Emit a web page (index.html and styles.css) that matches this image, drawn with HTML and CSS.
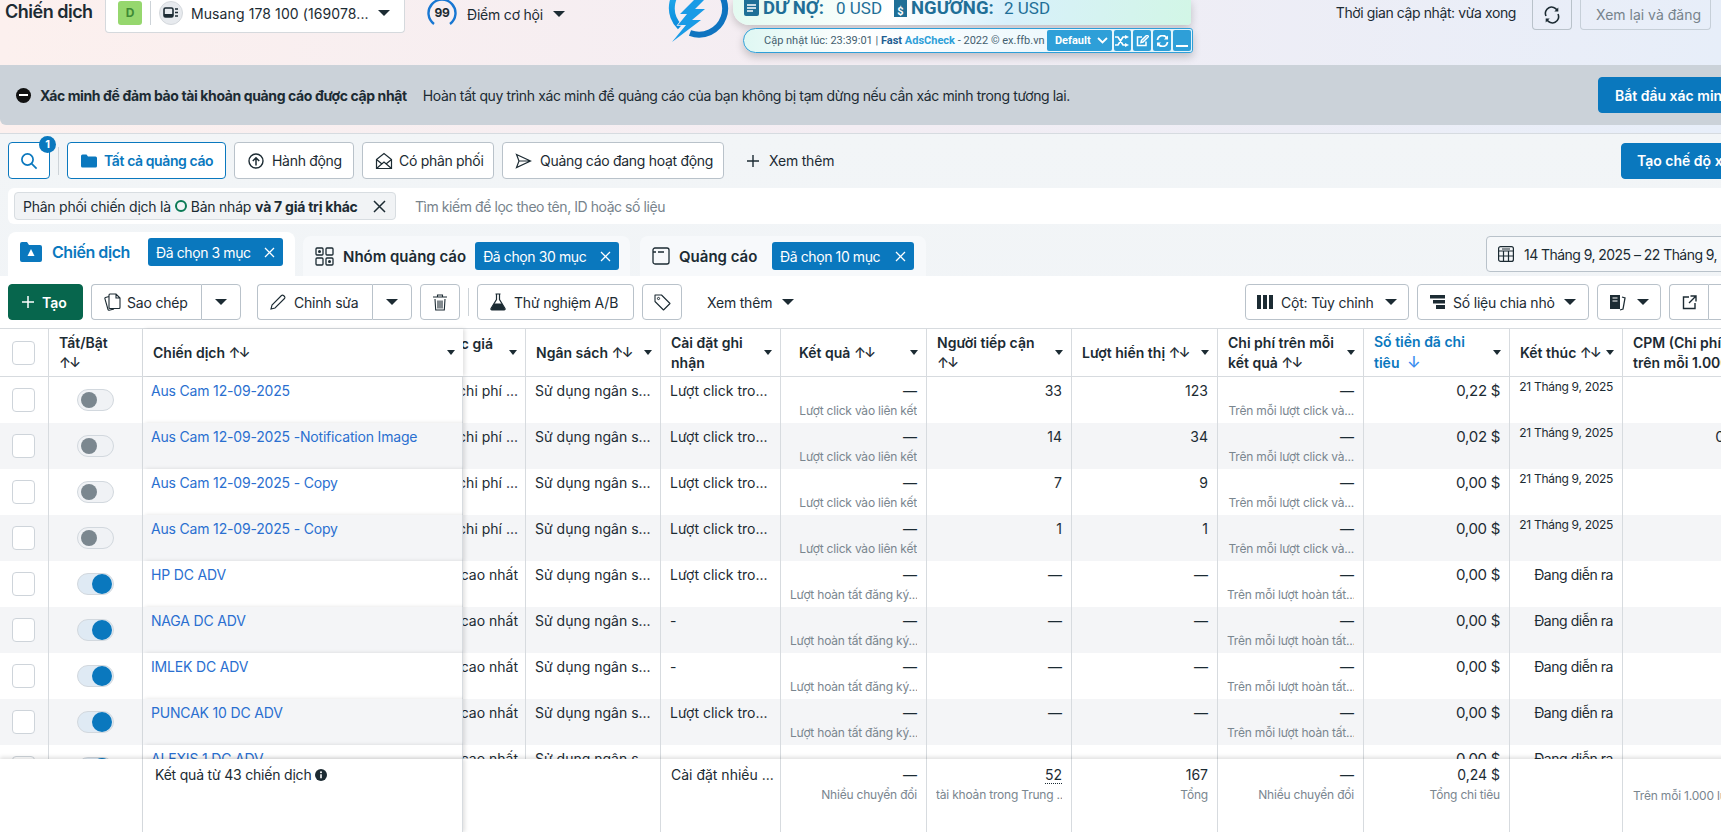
FILE: index.html
```html
<!DOCTYPE html>
<html lang="vi">
<head>
<meta charset="utf-8">
<title>Chiến dịch</title>
<link rel="stylesheet" href="styles.css">
</head>
<body>
<div class="page">
  <header class="topbar">
    <h1 class="title">Chiến dịch</h1>
    <div class="account">
      <span class="badge-d">D</span>
      <span class="vsep"></span>
      <span class="acc-icon"><svg width="16" height="14" viewBox="0 0 16 14"><rect x="1" y="2" width="9" height="9" rx="1.5" fill="none" stroke="#1c2b33" stroke-width="1.6"/><rect x="1" y="8" width="9" height="3" fill="#1c2b33"/><path d="M12 3h3M12 6.5h3M12 10h3" stroke="#1c2b33" stroke-width="1.6"/></svg></span>
      <span class="acc-name">Musang 178 100 (169078...</span>
      <span class="caret big"></span>
    </div>
    <div class="score">
      <span class="ring"><svg width="30" height="30" viewBox="0 0 30 30"><path d="M7 25A13.5 13.5 0 1 1 23 25" fill="none" stroke="#1877d2" stroke-width="2.4"/></svg><b>99</b></span>
      <span>Điểm cơ hội</span>
      <span class="caret big"></span>
    </div>
    <div class="top-right">
      <span class="updated">Thời gian cập nhật: vừa xong</span>
      <button class="btn top-btn icon-top"><svg width="18" height="18" viewBox="0 0 18 18"><path d="M3 10A6.2 6.2 0 0 1 14.2 4.6M15 8A6.2 6.2 0 0 1 3.8 13.4" fill="none" stroke="#1c2b33" stroke-width="1.6"/><path d="M15.3 1.6v4h-4zM2.7 16.4v-4h4z" fill="#1c2b33"/></svg></button>
      <button class="btn top-btn review">Xem lại và đăng</button>
    </div>
  </header>

  <section class="banner">
    <span class="stop"><i></i></span>
    <b>Xác minh để đảm bảo tài khoản quảng cáo được cập nhật</b>
    <span class="banner-text">Hoàn tất quy trình xác minh để quảng cáo của bạn không bị tạm dừng nếu cần xác minh trong tương lai.</span>
    <button class="btn primary banner-btn">Bắt đầu xác minh</button>
  </section>

  <section class="workspace">
    <div class="views">
      <button class="btn search selected"><svg width="18" height="18" viewBox="0 0 18 18"><circle cx="7.5" cy="7.5" r="5.6" fill="none" stroke="#0a78be" stroke-width="1.7"/><path d="M11.6 11.6l5 5" stroke="#0a78be" stroke-width="1.7"/></svg><span class="count">1</span></button>
      <span class="vsep tall"></span>
      <button class="btn selected all"><svg width="16" height="14" viewBox="0 0 16 14"><path d="M0 2A1.5 1.5 0 0 1 1.5.5h4l1.5 2h7.5A1.5 1.5 0 0 1 16 4v8a1.5 1.5 0 0 1-1.5 1.5h-13A1.5 1.5 0 0 1 0 12z" fill="#0a78be"/></svg>Tất cả quảng cáo</button>
      <button class="btn v1"><svg width="16" height="16" viewBox="0 0 16 16"><circle cx="8" cy="8" r="7" fill="none" stroke="#1c2b33" stroke-width="1.4"/><path d="M8 12.5V5M4.8 8L8 4.8 11.2 8" fill="none" stroke="#1c2b33" stroke-width="1.5"/></svg>Hành động</button>
      <button class="btn v2"><svg width="18" height="18" viewBox="0 0 18 18"><path d="M1.5 7.5L9 1.5l7.5 6v9h-15zM1.5 16.5L9 10l7.5 6.5M1.5 7.5L7 12M16.5 7.5L11 12" fill="none" stroke="#1c2b33" stroke-width="1.2"/></svg>Có phân phối</button>
      <button class="btn v3"><svg width="17" height="16" viewBox="0 0 17 16"><path d="M1.5 1.5L15.5 8 1.5 14.500 4 8zM4 8h11.5" fill="none" stroke="#1c2b33" stroke-width="1.2"/></svg>Quảng cáo đang hoạt động</button>
      <span class="more-view"><svg width="12" height="12" viewBox="0 0 12 12"><path d="M6 0v12M0 6h12" stroke="#1c2b33" stroke-width="1.4"/></svg>Xem thêm</span>
      <button class="btn primary create-view">Tạo chế độ xem</button>
    </div>

    <div class="filter">
      <span class="chip">Phân phối chiến dịch là <i class="dot"></i> Bản nháp <b>và 7 giá trị khác</b>
        <svg class="chip-x" width="13" height="13" viewBox="0 0 13 13"><path d="M1 1l11 11M12 1L1 12" stroke="#1c2b33" stroke-width="1.5"/></svg>
      </span>
      <span class="placeholder">Tìm kiếm để lọc theo tên, ID hoặc số liệu</span>
    </div>

    <div class="tabs">
      <div class="tab active">
        <svg width="22" height="20" viewBox="0 0 22 20"><path d="M0 2a2 2 0 0 1 2-2h5l2 3h11a2 2 0 0 1 2 2v13a2 2 0 0 1-2 2H2a2 2 0 0 1-2-2z" fill="#0a78be"/><path d="M11 7l3.5 7h-7z" fill="#fff"/></svg>
        <span class="tab-name">Chiến dịch</span>
        <span class="sel-chip">Đã chọn 3 mục<svg width="11" height="11" viewBox="0 0 11 11"><path d="M1 1l9 9M10 1l-9 9" stroke="#fff" stroke-width="1.3"/></svg></span>
      </div>
      <div class="tab t2">
        <svg width="19" height="19" viewBox="0 0 19 19"><g fill="none" stroke="#1c2b33" stroke-width="1.3"><rect x="1" y="1" width="7" height="7" rx="1"/><rect x="11" y="1" width="7" height="7" rx="1"/><rect x="1" y="11" width="7" height="7" rx="1"/><rect x="11" y="11" width="7" height="7" rx="1"/></g><circle cx="4.5" cy="4.5" r="1.5" fill="#1c2b33"/><circle cx="14.5" cy="14.5" r="1.5" fill="#1c2b33"/></svg>
        <span class="tab-name">Nhóm quảng cáo</span>
        <span class="sel-chip">Đã chọn 30 mục<svg width="11" height="11" viewBox="0 0 11 11"><path d="M1 1l9 9M10 1l-9 9" stroke="#fff" stroke-width="1.3"/></svg></span>
      </div>
      <div class="tab t3">
        <svg width="18" height="18" viewBox="0 0 18 18"><rect x="1" y="1" width="16" height="16" rx="2" fill="none" stroke="#1c2b33" stroke-width="1.3"/><path d="M1 5h3M6 5h6" stroke="#1c2b33" stroke-width="1.3"/></svg>
        <span class="tab-name">Quảng cáo</span>
        <span class="sel-chip">Đã chọn 10 mục<svg width="11" height="11" viewBox="0 0 11 11"><path d="M1 1l9 9M10 1l-9 9" stroke="#fff" stroke-width="1.3"/></svg></span>
      </div>
      <button class="btn date"><svg width="16" height="16" viewBox="0 0 16 16"><g fill="none" stroke="#1c2b33" stroke-width="1.2"><rect x=".6" y=".6" width="14.8" height="14.8" rx="2"/><path d="M.6 5h14.8M.6 10h14.8M5.5 5v10.4M10.5 5v10.4M4 3h8"/></g></svg>14 Tháng 9, 2025 – 22 Tháng 9, 2025</button>
    </div>

    <div class="panel">
      <div class="toolbar">
        <button class="btn create"><svg width="12" height="12" viewBox="0 0 12 12"><path d="M6 0v12M0 6h12" stroke="#fff" stroke-width="1.5"/></svg>Tạo</button>
        <div class="split s-copy">
          <button class="btn part main"><svg width="17" height="18" viewBox="0 0 17 18"><path d="M6 1h6l4 4v9.5a1 1 0 0 1-1 1H6a1 1 0 0 1-1-1V2a1 1 0 0 1 1-1zM12 1v4h4M5 3.5L1.5 4.5a1 1 0 0 0-.6 1.2L4 16.5a1 1 0 0 0 1.200.7L10 16" fill="none" stroke="#1c2b33" stroke-width="1.1"/></svg>Sao chép</button>
          <button class="btn part drop"><span class="caret big"></span></button>
        </div>
        <div class="split s-edit">
          <button class="btn part main"><svg width="16" height="16" viewBox="0 0 16 16"><path d="M1 15l1-4L11.5 1.5a1.4 1.4 0 0 1 2 0l1 1a1.4 1.4 0 0 1 0 2L5 14z" fill="none" stroke="#1c2b33" stroke-width="1.1"/></svg>Chỉnh sửa</button>
          <button class="btn part drop"><span class="caret big"></span></button>
        </div>
        <button class="btn square trash"><svg width="14" height="17" viewBox="0 0 14 17"><path d="M0 3h14M4.5 3V1h5v2M2 5l.7 11h8.6L12 5M5 6.5v8M7 6.5v8M9 6.5v8" fill="none" stroke="#1c2b33" stroke-width="1.1"/></svg></button>
        <span class="vsep tall"></span>
        <button class="btn ab"><svg width="16" height="18" viewBox="0 0 16 18"><path d="M5.5 1h5M6.5 1v5.5L1 15.5a1 1 0 0 0 .9 1.5h12.2a1 1 0 0 0 .9-1.5L9.5 6.5V1" fill="none" stroke="#1c2b33" stroke-width="1.2"/><path d="M4 10.5h8l3 5.500a.7.7 0 0 1-.6 1H1.6a.7.7 0 0 1-.6-1z" fill="#1c2b33"/></svg>Thử nghiệm A/B</button>
        <button class="btn square tag"><svg width="17" height="17" viewBox="0 0 17 17"><path d="M1 1h6.5L16 9.5 9.5 16 1 7.5z" fill="none" stroke="#1c2b33" stroke-width="1.1" stroke-linejoin="round"/><circle cx="4.5" cy="4.5" r="1.1" fill="none" stroke="#1c2b33"/></svg></button>
        <span class="more-tool">Xem thêm<span class="caret big"></span></span>
        <div class="tool-right">
          <button class="btn cols-btn"><svg width="16" height="14" viewBox="0 0 16 14"><path d="M0 0h4v14H0zM6 0h4v14H6zM12 0h4v14h-4z" fill="#1c2b33"/></svg>Cột: Tùy chỉnh<span class="caret big"></span></button>
          <button class="btn break-btn"><svg width="15" height="14" viewBox="0 0 15 14"><path d="M0 0h15v3.5H0zM3 5h12v3.5H3zM6 10h9v4H6z" fill="#1c2b33"/></svg>Số liệu chia nhỏ<span class="caret big"></span></button>
          <button class="btn book-btn"><svg width="17" height="17" viewBox="0 0 17 17"><path d="M1 1h10v14H1z" fill="#1c2b33"/><path d="M3.5 4h5M3.5 7h5" stroke="#fff"/><path d="M13 3l3 1-2 11-3 1" fill="none" stroke="#1c2b33" stroke-width="1.3"/></svg><span class="caret big"></span></button>
          <div class="split s-share">
            <button class="btn part share"><svg width="15" height="15" viewBox="0 0 15 15"><path d="M7 2H1.5v11.5H13V8M8.5 1H14v5.5M14 1L7 8" fill="none" stroke="#1c2b33" stroke-width="1.4"/></svg></button>
            <button class="btn part drop"></button>
          </div>
        </div>
      </div>

      <div class="table">
        <div class="cols thead">
          <div class="th cb-cell"><span class="checkbox"></span></div>
          <div class="th"><span>Tất/Bật<br><span class="sort">↑↓</span></span></div>
          <div class="th frozen"><span>Chiến dịch <span class="sort">↑↓</span></span><span class="caret"></span></div>
          <div class="th clip"><span class="clip-label">Chiến lược giá</span><span class="caret"></span></div>
          <div class="th"><span>Ngân sách <span class="sort">↑↓</span></span><span class="caret"></span></div>
          <div class="th"><span>Cài đặt ghi nhận</span><span class="caret"></span></div>
          <div class="th indent"><span>Kết quả <span class="sort">↑↓</span></span><span class="caret"></span></div>
          <div class="th"><span>Người tiếp cận <span class="sort">↑↓</span></span><span class="caret"></span></div>
          <div class="th"><span>Lượt hiển thị <span class="sort">↑↓</span></span><span class="caret"></span></div>
          <div class="th"><span>Chi phí trên mỗi kết quả <span class="sort">↑↓</span></span><span class="caret"></span></div>
          <div class="th sorted"><span>Số tiền đã chi tiêu <span class="sort">↓</span></span><span class="caret"></span></div>
          <div class="th"><span>Kết thúc <span class="sort">↑↓</span></span><span class="caret"></span></div>
          <div class="th last-head"><span>CPM (Chi phí<br>trên mỗi 1.000 lượt hiển thị)</span></div>
        </div>

        <div class="tbody">
          <div class="cols tr">
            <div class="td cb-cell"><span class="checkbox"></span></div><div class="td sw-cell"><span class="switch"></span></div>
            <div class="td frozen"><a class="link">Aus Cam 12-09-2025</a></div><div class="td clip">Giá thầu chi phí ...</div>
            <div class="td">Sử dụng ngân s...</div><div class="td">Lượt click tro...</div>
            <div class="td num"><span>—</span><small>Lượt click vào liên kết</small></div><div class="td num">33</div><div class="td num">123</div>
            <div class="td num"><span>—</span><small>Trên mỗi lượt click và...</small></div><div class="td num money">0,22 $</div><div class="td num date-cell">21 Tháng 9, 2025</div><div class="td num"></div>
          </div>
          <div class="cols tr">
            <div class="td cb-cell"><span class="checkbox"></span></div><div class="td sw-cell"><span class="switch"></span></div>
            <div class="td frozen"><a class="link">Aus Cam 12-09-2025 -Notification Image</a></div><div class="td clip">Giá thầu chi phí ...</div>
            <div class="td">Sử dụng ngân s...</div><div class="td">Lượt click tro...</div>
            <div class="td num"><span>—</span><small>Lượt click vào liên kết</small></div><div class="td num">14</div><div class="td num">34</div>
            <div class="td num"><span>—</span><small>Trên mỗi lượt click và...</small></div><div class="td num money">0,02 $</div><div class="td num date-cell">21 Tháng 9, 2025</div><div class="td num money">0,59 $</div>
          </div>
          <div class="cols tr">
            <div class="td cb-cell"><span class="checkbox"></span></div><div class="td sw-cell"><span class="switch"></span></div>
            <div class="td frozen"><a class="link">Aus Cam 12-09-2025 - Copy</a></div><div class="td clip">Giá thầu chi phí ...</div>
            <div class="td">Sử dụng ngân s...</div><div class="td">Lượt click tro...</div>
            <div class="td num"><span>—</span><small>Lượt click vào liên kết</small></div><div class="td num">7</div><div class="td num">9</div>
            <div class="td num"><span>—</span><small>Trên mỗi lượt click và...</small></div><div class="td num money">0,00 $</div><div class="td num date-cell">21 Tháng 9, 2025</div><div class="td num"></div>
          </div>
          <div class="cols tr">
            <div class="td cb-cell"><span class="checkbox"></span></div><div class="td sw-cell"><span class="switch"></span></div>
            <div class="td frozen"><a class="link">Aus Cam 12-09-2025 - Copy</a></div><div class="td clip">Giá thầu chi phí ...</div>
            <div class="td">Sử dụng ngân s...</div><div class="td">Lượt click tro...</div>
            <div class="td num"><span>—</span><small>Lượt click vào liên kết</small></div><div class="td num">1</div><div class="td num">1</div>
            <div class="td num"><span>—</span><small>Trên mỗi lượt click và...</small></div><div class="td num money">0,00 $</div><div class="td num date-cell">21 Tháng 9, 2025</div><div class="td num"></div>
          </div>
          <div class="cols tr">
            <div class="td cb-cell"><span class="checkbox"></span></div><div class="td sw-cell"><span class="switch on"></span></div>
            <div class="td frozen"><a class="link">HP DC ADV</a></div><div class="td clip">Số lượng cao nhất</div>
            <div class="td">Sử dụng ngân s...</div><div class="td">Lượt click tro...</div>
            <div class="td num"><span>—</span><small>Lượt hoàn tất đăng ký...</small></div><div class="td num">—</div><div class="td num">—</div>
            <div class="td num"><span>—</span><small>Trên mỗi lượt hoàn tất...</small></div><div class="td num money">0,00 $</div><div class="td num live">Đang diễn ra</div><div class="td num"></div>
          </div>
          <div class="cols tr">
            <div class="td cb-cell"><span class="checkbox"></span></div><div class="td sw-cell"><span class="switch on"></span></div>
            <div class="td frozen"><a class="link">NAGA DC ADV</a></div><div class="td clip">Số lượng cao nhất</div>
            <div class="td">Sử dụng ngân s...</div><div class="td">-</div>
            <div class="td num"><span>—</span><small>Lượt hoàn tất đăng ký...</small></div><div class="td num">—</div><div class="td num">—</div>
            <div class="td num"><span>—</span><small>Trên mỗi lượt hoàn tất...</small></div><div class="td num money">0,00 $</div><div class="td num live">Đang diễn ra</div><div class="td num"></div>
          </div>
          <div class="cols tr">
            <div class="td cb-cell"><span class="checkbox"></span></div><div class="td sw-cell"><span class="switch on"></span></div>
            <div class="td frozen"><a class="link">IMLEK DC ADV</a></div><div class="td clip">Số lượng cao nhất</div>
            <div class="td">Sử dụng ngân s...</div><div class="td">-</div>
            <div class="td num"><span>—</span><small>Lượt hoàn tất đăng ký...</small></div><div class="td num">—</div><div class="td num">—</div>
            <div class="td num"><span>—</span><small>Trên mỗi lượt hoàn tất...</small></div><div class="td num money">0,00 $</div><div class="td num live">Đang diễn ra</div><div class="td num"></div>
          </div>
          <div class="cols tr">
            <div class="td cb-cell"><span class="checkbox"></span></div><div class="td sw-cell"><span class="switch on"></span></div>
            <div class="td frozen"><a class="link">PUNCAK 10 DC ADV</a></div><div class="td clip">Số lượng cao nhất</div>
            <div class="td">Sử dụng ngân s...</div><div class="td">Lượt click tro...</div>
            <div class="td num"><span>—</span><small>Lượt hoàn tất đăng ký...</small></div><div class="td num">—</div><div class="td num">—</div>
            <div class="td num"><span>—</span><small>Trên mỗi lượt hoàn tất...</small></div><div class="td num money">0,00 $</div><div class="td num live">Đang diễn ra</div><div class="td num"></div>
          </div>
          <div class="cols tr">
            <div class="td cb-cell"><span class="checkbox"></span></div><div class="td sw-cell"><span class="switch on"></span></div>
            <div class="td frozen"><a class="link">ALEXIS 1 DC ADV</a></div><div class="td clip">Số lượng cao nhất</div>
            <div class="td">Sử dụng ngân s...</div><div class="td"></div>
            <div class="td num"></div><div class="td num"></div><div class="td num"></div>
            <div class="td num"></div><div class="td num money">0,00 $</div><div class="td num live">Đang diễn ra</div><div class="td num"></div>
          </div>
        </div>

        <div class="cols tfoot">
          <div class="tf left-blank"></div>
          <div class="tf frozen foot-name">Kết quả từ 43 chiến dịch <svg width="12" height="12" viewBox="0 0 12 12"><circle cx="6" cy="6" r="6" fill="#1c2b33"/><path d="M6 5.2v4" stroke="#fff" stroke-width="1.6"/><circle cx="6" cy="3.2" r="1" fill="#fff"/></svg></div>
          <div class="tf gap-blank"></div>
          <div class="tf foot-set">Cài đặt nhiều ...</div>
          <div class="tf num"><span>—</span><small>Nhiều chuyển đổi</small></div>
          <div class="tf num"><span class="dotted">52</span><small>tài khoản trong Trung ...</small></div>
          <div class="tf num"><span>167</span><small>Tổng</small></div>
          <div class="tf num"><span>—</span><small>Nhiều chuyển đổi</small></div>
          <div class="tf num"><span>0,24 $</span><small>Tổng chi tiêu</small></div>
          <div class="tf num"></div>
          <div class="tf last-foot"><small>Trên mỗi 1.000 lượt hiển thị</small></div>
        </div>
      </div>
    </div>
  </section>

  <aside class="ext">
    <svg class="ext-logo" width="66" height="56" viewBox="0 0 66 56">
      <defs><linearGradient id="lg" x1="0" y1="0" x2="0" y2="1"><stop offset="0" stop-color="#29b3f0"/><stop offset="1" stop-color="#0b8bdc"/></linearGradient></defs>
      <path d="M20 -16A26 26 0 0 0 12 27" fill="none" stroke="url(#lg)" stroke-width="6"/>
      <path d="M40 -16A26 26 0 0 1 22 33" fill="none" stroke="#0f74c0" stroke-width="6"/>
      <path d="M28 -2L38 -2 27 9 37 9 24 20 33 20 4 42 18 25 10 25 19 14 12 14z" fill="#1a9be6" stroke="#f3edf3" stroke-width="1.5" paint-order="stroke"/>
    </svg>
    <div class="ext-top">
      <svg class="ico1" width="15" height="16" viewBox="0 0 15 16"><path d="M0 0h15v14a2 2 0 0 1-2 2H2a2 2 0 0 1-2-2z" fill="#1f6f97"/><path d="M3 5h9M3 8h9M3 11h6" stroke="#fff" stroke-width="1.3"/></svg>
      <b class="due">DƯ NỢ:</b><span class="ext-val">0 USD</span>
      <svg class="ico2" width="13" height="17" viewBox="0 0 13 17"><path d="M0 0h13v17H0z" fill="#1f6f97"/><text x="6.5" y="15" text-anchor="middle" font-size="11" font-weight="700" font-family="Roboto, sans-serif" fill="#fff">$</text></svg>
      <b class="limit">NGƯỠNG:</b><span class="ext-val">2 USD</span>
    </div>
    <div class="ext-strip">
      <span class="ext-info">Cập nhật lúc: 23:39:01 | <b class="dark">Fast</b> <b class="light">AdsCheck</b> - 2022 © ex.ffb.vn</span>
      <span class="ext-select">Default<svg width="11" height="7" viewBox="0 0 11 7"><path d="M1 1l4.5 4.5L10 1" fill="none" stroke="#fff" stroke-width="1.8"/></svg></span>
      <span class="ext-btn"><svg width="14" height="12" viewBox="0 0 14 12"><path d="M0 2h3l5 8h3M0 10h3l5-8h3" fill="none" stroke="#fff" stroke-width="1.7"/><path d="M10 0l4 2-4 2zM10 8l4 2-4 2z" fill="#fff"/></svg></span>
      <span class="ext-btn"><svg width="13" height="12" viewBox="0 0 13 12"><path d="M10 6.5V10.5H1.5V2H6M5 7.5l.5-2L11 0l1.5 1.5L7 7z" fill="none" stroke="#fff" stroke-width="1.5"/></svg></span>
      <span class="ext-btn"><svg width="13" height="12" viewBox="0 0 13 12"><path d="M1.5 5A5 5 0 0 1 11 3.5M11.5 7A5 5 0 0 1 2 8.5" fill="none" stroke="#fff" stroke-width="1.8"/><path d="M12 .5v4H8zM1 11.5v-4h4z" fill="#fff"/></svg></span>
      <span class="ext-btn min"><i></i></span>
    </div>
  </aside>
</div>
</body>
</html>
```
FILE: styles.css
```css
* { box-sizing: border-box; }
html, body { margin: 0; height: 100%; overflow: hidden; }
body { font-family: "Inter", "Noto Sans", sans-serif; font-size: 14px; color: #1c2b33; }
button { font: inherit; color: inherit; letter-spacing: inherit; }
svg { flex-shrink: 0; }
.page {
  position: relative;
  width: 1721px;
  height: 832px;
  overflow: hidden;
  background: linear-gradient(90deg, #fcf0ee 0%, #f3edf3 50%, #e7eef9 100%);
}

/* generic */
.btn {
  display: flex;
  align-items: center;
  height: 36px;
  flex-shrink: 0;
  padding: 0 12px;
  gap: 8px;
  background: #fff;
  border: 1px solid #b9c2ca;
  border-radius: 4px;
  white-space: nowrap;
}
.btn.selected { border-color: #0a78be; color: #0a78be; font-weight: 600; }
.btn.primary { background: #0a78be; border-color: #0a78be; color: #fff; font-weight: 600; }
.vsep { display: block; width: 1px; height: 24px; background: #cdd3d8; flex-shrink: 0; }
.vsep.tall { height: 28px; }
.caret { display: inline-block; width: 0; height: 0; border: 4px solid transparent; border-top: 5px solid #1c2b33; border-bottom: 0; flex-shrink: 0; }
.caret.big { border-width: 6px 6px 0; }

/* top bar */
.topbar { display: flex; align-items: flex-start; height: 65px; padding-left: 5px; }
.title { margin: 0; font-size: 18px; line-height: 24px; font-weight: 600; width: 100px; flex-shrink: 0; letter-spacing: -.5px; }
.account {
  display: flex; align-items: center; width: 300px; height: 33px; padding: 0 14px 6px 12px;
  background: #fff; border: 1px solid #d5d9dd; border-top: 0; border-radius: 0 0 4px 4px;
}
.badge-d { width: 24px; height: 24px; border-radius: 3px; background: #96d76e; color: #3f8a35; font-size: 12px; font-weight: 700; text-align: center; line-height: 24px; flex-shrink: 0; }
.account .vsep { margin: 0 8px; }
.acc-icon { width: 24px; height: 24px; border-radius: 50%; background: #e7eaee; border: 1px solid #d5d9dd; display: flex; align-items: center; justify-content: center; flex-shrink: 0; margin-right: 8px; }
.acc-name { flex: 1; white-space: nowrap; overflow: hidden; letter-spacing: .1px; }
.score { display: flex; align-items: center; margin-left: 22px; gap: 10px; height: 28px; letter-spacing: -.2px; }
.ring { position: relative; width: 30px; height: 30px; display: block; }
.ring svg { display: block; }
.ring b { position: absolute; inset: 0; text-align: center; line-height: 28px; font-size: 12px; }
.top-right { margin-left: auto; display: flex; align-items: flex-start; padding-right: 10px; }
.updated { line-height: 26px; margin-right: 16px; letter-spacing: -.4px; }
.top-btn { height: 30px; background: transparent; border-top: 0; border-radius: 0 0 4px 4px; }
.icon-top { width: 40px; padding: 0; justify-content: center; margin-right: 8px; }
.review { width: 131px; justify-content: center; color: #77838c; border-color: #c6cfd8; padding: 0 0 0 6px; }

/* banner */
.banner { display: flex; align-items: center; height: 60px; background: #cbd2d9; border-radius: 0 0 0 6px; padding-left: 16px; overflow: hidden; letter-spacing: -.38px; }
.stop { width: 15px; height: 15px; border-radius: 50%; background: #111; display: flex; align-items: center; justify-content: center; margin-right: 9px; flex-shrink: 0; }
.stop i { width: 9px; height: 2.5px; background: #fff; }
.banner-text { margin-left: 16px; white-space: nowrap; }
.banner-btn { margin-left: auto; margin-right: -40px; width: 163px; padding: 0 16px; letter-spacing: 0; }

/* workspace */
.workspace { margin-top: 8px; border-top: 1px solid #d6dbe0; background: linear-gradient(180deg, #f2f5f7 0%, #eff2f6 100%); height: 699px; }
.views { display: flex; align-items: center; height: 37px; margin-top: 8px; padding-left: 8px; gap: 8px; }
.search { width: 42px; padding: 0; justify-content: center; position: relative; height: 37px; }
.count { position: absolute; top: -7px; right: -7px; width: 17px; height: 17px; border-radius: 50%; background: #0a78be; color: #fff; font-size: 11px; font-weight: 700; line-height: 17px; text-align: center; }
.all { width: 159px; height: 37px; padding: 0 13px; letter-spacing: -.4px; gap: 7px; }
.v1 { width: 120px; height: 37px; padding: 0 13px; gap: 8px; letter-spacing: -.3px; }
.v2 { width: 132px; height: 37px; padding: 0 12px; gap: 6px; letter-spacing: -.3px; }
.v3 { width: 222px; height: 37px; padding: 0 12px; gap: 8px; letter-spacing: -.3px; }
.more-view { display: flex; align-items: center; gap: 10px; margin-left: 15px; letter-spacing: -.2px; }
.create-view { margin-left: auto; margin-right: -60px; width: 160px; padding: 0 15px; }

.filter { display: flex; align-items: center; height: 36px; margin: 9px 0 0 8px; padding-left: 6px; background: #fff; border-radius: 6px 0 0 6px; }
.chip { display: flex; align-items: center; gap: 4px; height: 28px; width: 382px; padding: 0 9px 0 8px; background: #f1f3f5; border: 1px solid #d8dde1; border-radius: 4px; white-space: nowrap; letter-spacing: -.24px; }
.dot { display: inline-block; width: 12px; height: 12px; border: 2px solid #0b7a55; border-radius: 50%; }
.chip-x { margin-left: auto; }
.placeholder { margin-left: 19px; color: #77838c; white-space: nowrap; letter-spacing: -.44px; }

.tabs { display: flex; align-items: flex-end; gap: 8px; height: 44px; margin: 8px 0 0 8px; }
.tab { display: flex; align-items: center; height: 40px; padding: 0 12px 0 12px; background: #f7f9fb; border-radius: 8px 8px 0 0; white-space: nowrap; flex-shrink: 0; gap: 9px; }
.tab.active { height: 44px; width: 287px; background: #fff; color: #0a78be; padding-bottom: 4px; gap: 10px; }
.t2 { width: 327px; padding-right: 11px; }
.t3 { width: 286px; margin-left: 2px; }
.tab-name { font-size: 15px; font-weight: 600; }
.active .tab-name { font-size: 16px; letter-spacing: -.45px; }
.sel-chip { display: flex; align-items: center; justify-content: space-between; height: 28px; width: 142px; padding: 0 8px; background: #0a78be; color: #fff; border-radius: 3px; margin-left: auto; letter-spacing: -.4px; }
.active .sel-chip { width: 135px; }
.t2 .sel-chip { width: 144px; }
.date { height: 36px; margin: 0 -65px 4px auto; width: 300px; padding: 0 11px; background: #f6f8fa; gap: 10px; letter-spacing: -.55px; font-size: 14px; }

.panel { background: #fff; }
.toolbar { display: flex; align-items: center; gap: 8px; height: 52px; padding-left: 8px; }
.create { width: 75px; background: #07664d; border-color: #07664d; color: #fff; font-weight: 600; padding: 0 13px; gap: 8px; }
.split { display: flex; flex-shrink: 0; }
.part { border-radius: 0; }
.part.main { border-right: 0; border-radius: 4px 0 0 4px; letter-spacing: -.2px; }
.part.drop { border-radius: 0 4px 4px 0; width: 40px; padding: 0; justify-content: center; }
.s-copy .main { width: 110px; gap: 6px; }
.s-edit { margin-left: 8px; }
.s-edit .main { width: 115px; }
.square { width: 40px; padding: 0; justify-content: center; }
.ab { width: 157px; letter-spacing: -.2px; }
.more-tool { display: flex; align-items: center; gap: 10px; margin-left: 17px; white-space: nowrap; letter-spacing: -.2px; }
.tool-right { display: flex; gap: 8px; margin-left: auto; margin-right: -27px; }
.cols-btn { width: 164px; padding: 0 11px; letter-spacing: -.2px; }
.cols-btn .caret, .break-btn .caret { margin-left: auto; }
.break-btn { width: 172px; padding: 0 12px; letter-spacing: -.2px; }
.book-btn { width: 64px; padding: 0 11px; justify-content: space-between; }
.share { width: 39px; padding: 0; justify-content: center; border-right: 0; border-radius: 4px 0 0 4px; }

/* table */
.cols { display: grid; grid-template-columns: 49px 94px 320px 63px 135px 120px 146px 145px 146px 146px 146px 113px 146px; width: 1769px; }
.thead { height: 49px; border-top: 1px solid #d7dbdf; border-bottom: 1px solid #d7dbdf; background: #fff; }
.th { display: flex; align-items: center; justify-content: space-between; gap: 2px; padding: 0 8px 0 10px; border-right: 1px solid #d7dbdf; font-weight: 600; line-height: 20px; background: #fff; min-width: 0; overflow: hidden; }
.indent { padding-left: 18px; }
.sort { font-weight: 500; letter-spacing: -2px; white-space: nowrap; }
.sorted > span:first-child { color: #0a78be; }
.sorted .sort { color: #3b8ef0; font-size: 16px; margin-left: 4px; }
.last-head { white-space: nowrap; }
.th.clip { justify-content: flex-end; position: relative; }
.clip-label { position: absolute; right: 32px; top: 5px; white-space: nowrap; }
.th.cb-cell, .td.cb-cell { padding: 0 0 0 12px; justify-content: flex-start; align-items: center; display: flex; }
.checkbox { display: block; width: 23px; height: 24px; background: #fff; border: 1px solid #ced4da; border-radius: 4px; }
.frozen { position: relative; z-index: 1; box-shadow: 2px 0 4px rgba(0, 0, 0, .12); border-right: 0; }
.tbody { height: 382px; overflow: hidden; }
.tr { height: 46px; background: #fff; }
.tr:nth-child(even) { background: #f4f5f7; }
.td { padding: 4px 9px 0; border-right: 1px solid #d7dbdf; line-height: 20px; white-space: nowrap; overflow: hidden; background: inherit; min-width: 0; }
.td.frozen { overflow: visible; padding-left: 8px; }
.link { color: #2a6fd0; letter-spacing: -.18px; }
.td.clip { display: flex; justify-content: flex-end; padding: 4px 7px 0 0; }
.num { text-align: right; }
.num small, .last-foot small { display: block; font-size: 12px; line-height: 18px; margin-top: 1px; color: #7a868f; white-space: nowrap; overflow: hidden; letter-spacing: -.2px; }
.date-cell { font-size: 12px; padding-top: 0; letter-spacing: -.3px; }
.live { letter-spacing: -.45px; }
.money { font-size: 15px; letter-spacing: -.3px; }
.sw-cell { display: flex; align-items: center; justify-content: center; padding: 0 1px 0 0; }
.switch { display: flex; align-items: center; width: 37px; height: 22px; padding: 0 3px; border-radius: 11px; background: #f0f2f5; border: 1px solid #d2d8de; }
.switch::before { content: ""; width: 16px; height: 16px; border-radius: 50%; background: #7b878f; }
.switch.on { background: #dfeaf4; justify-content: flex-end; padding: 0 1px; }
.switch.on::before { background: #0a78be; width: 20px; height: 20px; }

.tfoot { height: 73px; background: #fff; position: relative; z-index: 2; box-shadow: 0 -2px 4px rgba(0, 0, 0, .12); grid-template-columns: 143px 320px 198px 120px 146px 145px 146px 146px 146px 113px 146px; }
.tf { padding: 6px 9px 0; border-right: 1px solid #d7dbdf; line-height: 20px; background: #fff; white-space: nowrap; overflow: hidden; min-width: 0; }
.foot-name { padding-left: 12px; display: flex; align-items: flex-start; gap: 4px; overflow: visible; letter-spacing: -.2px; }
.foot-name svg { margin-top: 4px; }
.foot-set { padding-left: 10px; }
.dotted { border-bottom: 1px dotted #1c2b33; }
.last-foot { border-right: 0; padding-top: 27px; padding-left: 10px; }

/* extension overlay */
.ext { position: absolute; left: 668px; top: 0; width: 526px; height: 60px; }
.ext-logo { position: absolute; left: 0; top: 0; }
.ext-top {
  position: absolute; left: 65px; top: 0; width: 458px; height: 25px; display: flex; align-items: flex-start; padding-left: 11px;
  font-family: "Roboto", sans-serif; font-size: 17px; line-height: 17px; color: #1f6f97; border-radius: 0 0 4px 16px;
  background: linear-gradient(100deg, #e4faf1 0%, #fff 35%, #d8f0fb 60%, #d2f6e6 100%);
  box-shadow: 0 3px 8px rgba(0, 0, 0, .2);
}
.ext-top b { font-weight: 700; font-size: 18.5px; }
.due { margin-left: 4px; width: 61px; white-space: nowrap; }
.limit { margin-left: 4px; white-space: nowrap; width: 81px; }
.ext-val { margin: 0 13px 0 12px; width: 45px; white-space: nowrap; }
.ext-strip {
  position: absolute; left: 75px; top: 28px; width: 450px; height: 25px; display: flex; align-items: center; gap: 2px; padding: 1px;
  border: 1px solid #2e9fd8; border-radius: 13px 3px 3px 13px; background: linear-gradient(90deg, #dff7f3, #fff 25%, #e0f3fb 100%);
  font-family: "Roboto", sans-serif; font-size: 11px; color: #44606f;
  box-shadow: 0 4px 8px rgba(0, 0, 0, .2);
}
.ext-info { width: 302px; padding-left: 19px; white-space: nowrap; }
.dark { color: #1f5f93; }
.light { color: #2e9fd8; }
.ext-select { display: flex; align-items: center; justify-content: space-between; width: 65px; height: 21px; padding: 0 4px 0 8px; background: #2e9fd8; color: #fff; font-weight: 700; border-radius: 2px; }
.ext-btn { display: flex; align-items: center; justify-content: center; width: 18px; height: 21px; background: #2e9fd8; border-radius: 2px; }
.ext-btn.min i { display: block; width: 12px; height: 2px; background: #fff; margin-top: 10px; }
```
